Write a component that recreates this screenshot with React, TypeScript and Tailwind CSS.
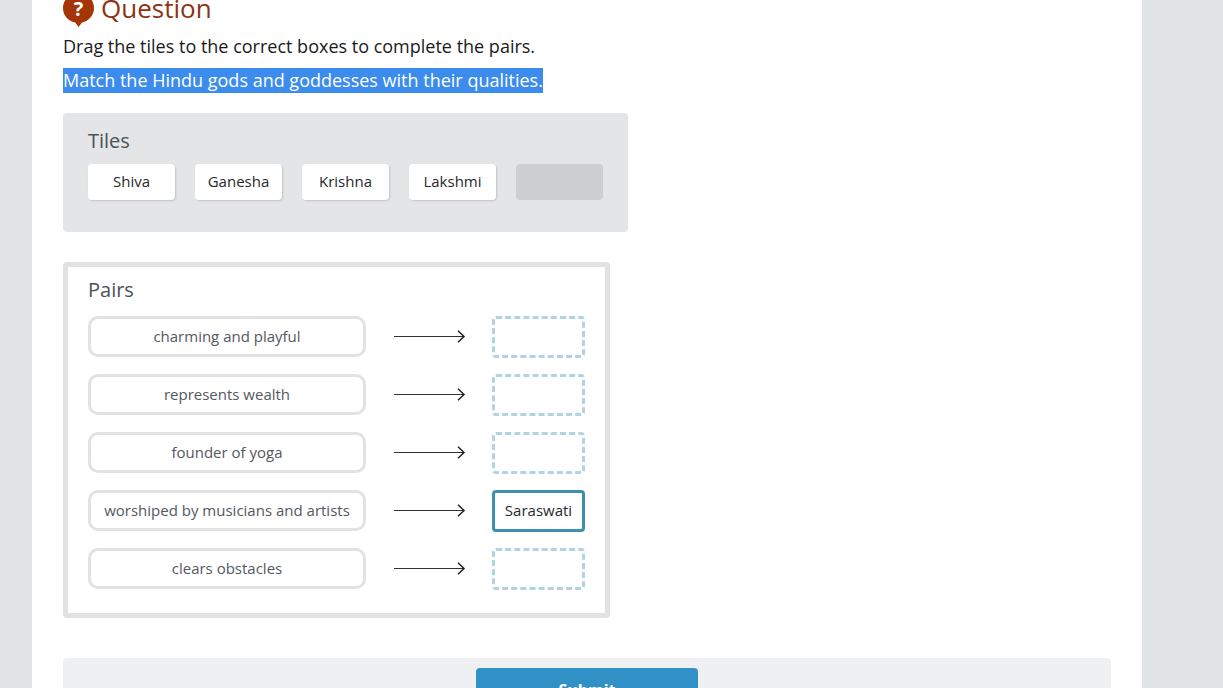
const TILES = ["Shiva", "Ganesha", "Krishna", "Lakshmi"];

const PAIRS = [
  { label: "charming and playful", answer: "" },
  { label: "represents wealth", answer: "" },
  { label: "founder of yoga", answer: "" },
  { label: "worshiped by musicians and artists", answer: "Saraswati" },
  { label: "clears obstacles", answer: "" },
];

function QuestionIcon() {
  return (
    <svg width="31" height="35" viewBox="0 0 31 35" className="shrink-0">
      <path d="M15.5 0C24 0 31 6.6 31 15c0 7.3-5.3 13-12 14.6L15.6 34l-3.4-4.4C5.2 28 0 22.3 0 15 0 6.6 7 0 15.5 0z" fill="#a33506" />
      <text x="15.5" y="23" textAnchor="middle" fontSize="20" fontWeight="700" fill="#fff" fontFamily="'Open Sans', sans-serif">?</text>
    </svg>
  );
}

function Arrow() {
  return (
    <svg width="72" height="14" viewBox="0 0 72 14" className="shrink-0">
      <path d="M0 6.5h70" fill="none" stroke="#333" strokeWidth="1.1" />
      <path d="M64 0.7l6 5.8-6 5.8" fill="none" stroke="#222" strokeWidth="1.5" />
    </svg>
  );
}

export default function App() {
  return (
    <div className="h-[688px] overflow-hidden bg-[#e1e4e4] font-['Open_Sans',sans-serif]">
      <div className="ml-[32px] h-full w-[1110px] overflow-hidden bg-white pl-[31px]">
        <div className="-mt-[7px] flex h-[36px] items-start gap-[7px]">
          <QuestionIcon />
          <h2 className="-mt-[3px] text-[26px] leading-[36px] text-[#8c3312]">Question</h2>
        </div>
        <p className="mt-[5px] text-[18px] leading-[25px] text-[#1a1a1a]">Drag the tiles to the correct boxes to complete the pairs.</p>
        <p className="mt-[9px] text-[18px] leading-[25px]">
          <span className="inline-block bg-[#3c8ced] text-white">Match the Hindu gods and goddesses with their qualities.</span>
        </p>

        <section className="mt-[20px] h-[119px] w-[565px] rounded-[4px] bg-[#e4e5e7] px-[25px] pt-[14px]">
          <h3 className="text-[20px] leading-[28px] text-[#4b5258]">Tiles</h3>
          <div className="mt-[9px] flex gap-[20px]">
            {TILES.map((tile) => (
              <div key={tile} className="flex h-[36px] w-[87px] items-center justify-center rounded-[4px] bg-white pb-[2px] text-[15px] text-[#26292b] shadow-[1px_1px_2px_rgba(0,0,0,0.15)]">
                {tile}
              </div>
            ))}
            <div className="h-[36px] w-[87px] rounded-[4px] bg-[#cdcfd1]" />
          </div>
        </section>

        <section className="mt-[30px] h-[356px] w-[547px] rounded-[4px] border-[5px] border-[#e2e2e2] pl-[20px] pr-[20px] pt-[9px]">
          <h3 className="text-[20px] leading-[28px] text-[#4b5258]">Pairs</h3>
          <div className="mt-[12px] flex flex-col gap-[16px]">
            {PAIRS.map((pair) => (
              <div key={pair.label} className="flex h-[42px] items-center">
                <div className="flex h-[41px] w-[278px] items-center justify-center self-start rounded-[10px] border-[3px] border-[#e2e2e2] pb-[1px] text-[15px] text-[#53595e]">
                  {pair.label}
                </div>
                <div className="ml-[28px]">
                  <Arrow />
                </div>
                {pair.answer ? (
                  <div className="ml-[26px] flex h-[42px] w-[93px] items-center justify-center rounded-[4px] border-[3px] border-[#3f8fb2] pb-[2px] text-[15px] text-[#26292b]">
                    {pair.answer}
                  </div>
                ) : (
                  <div className="ml-[26px] h-[42px] w-[93px] rounded-[4px] border-[3px] border-dashed border-[#b0d4e3]" />
                )}
              </div>
            ))}
          </div>
        </section>

        <div className="mt-[40px] flex h-[60px] w-[1048px] justify-center rounded-t-[4px] bg-[#eef0f2] pt-[10px]">
          <button className="h-[50px] w-[222px] self-start rounded-[4px] bg-[#3191c6] pb-[6px] text-[16px] leading-[20px] font-bold text-white">
            <span className="block">Submit</span>
          </button>
        </div>
      </div>
    </div>
  );
}
